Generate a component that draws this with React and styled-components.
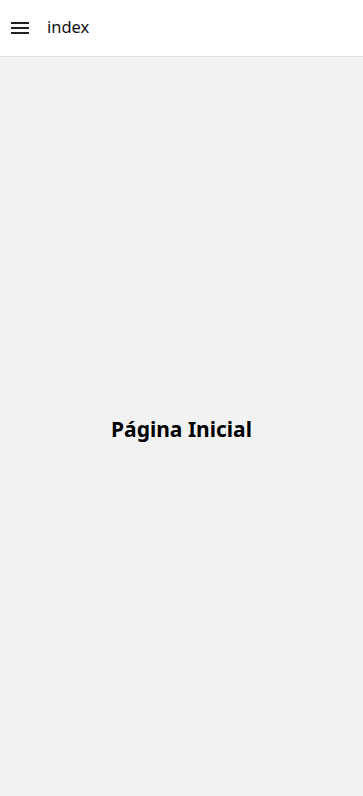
import React from "react";
import styled, { createGlobalStyle } from "styled-components";

const GlobalStyle = createGlobalStyle`
  html, body {
    margin: 0;
    padding: 0;
    height: 100%;
  }
  body {
    font-family: "Noto Sans", "Open Sans", sans-serif;
    background: #f2f2f2;
  }
  #root {
    height: 100%;
  }
`;

const Page = styled.div`
  display: flex;
  flex-direction: column;
  height: 100vh;
`;

const Header = styled.header`
  display: flex;
  align-items: center;
  height: 56px;
  padding: 0 11px;
  background: #ffffff;
  border-bottom: 1px solid #e0e0e0;
  flex-shrink: 0;
`;

const MenuButton = styled.button`
  display: flex;
  align-items: center;
  justify-content: center;
  width: 18px;
  height: 18px;
  padding: 0;
  margin-right: 18px;
  border: none;
  background: transparent;
  cursor: pointer;
`;

const HeaderTitle = styled.span`
  font-size: 16.5px;
  color: #111111;
  line-height: 1;
  margin-top: -2px;
`;

const Content = styled.main`
  flex: 1;
  display: flex;
  align-items: center;
  justify-content: center;
  padding-top: 4px;
`;

const PageTitle = styled.h1`
  margin: 0;
  font-size: 21px;
  font-weight: 700;
  color: #000000;
`;

const App = () => {
    return (
        <Page>
            <GlobalStyle />
            <Header>
                <MenuButton aria-label="menu">
                    <svg width="18" height="14" viewBox="0 0 18 14">
                        <rect x="0" y="1" width="18" height="2" fill="#222" />
                        <rect x="0" y="6" width="18" height="2" fill="#222" />
                        <rect x="0" y="11" width="18" height="2" fill="#222" />
                    </svg>
                </MenuButton>
                <HeaderTitle>index</HeaderTitle>
            </Header>
            <Content>
                <PageTitle>Página Inicial</PageTitle>
            </Content>
        </Page>
    );
};

export default App;
